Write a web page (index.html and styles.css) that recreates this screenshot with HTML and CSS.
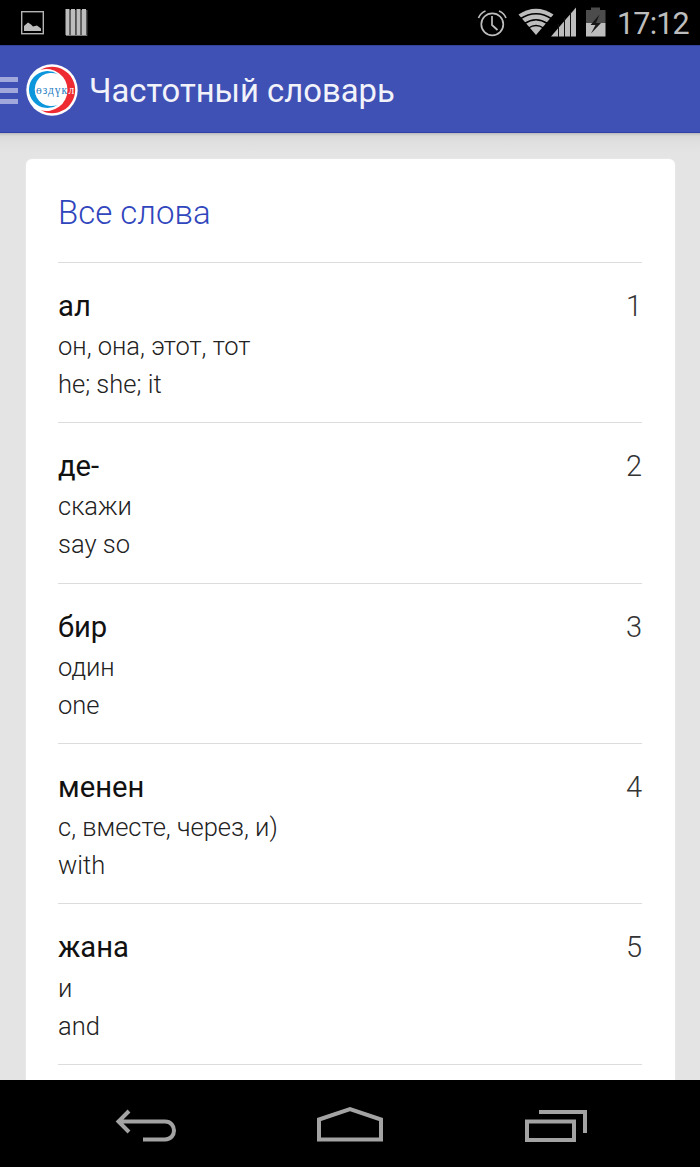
FILE: index.html
```html
<!DOCTYPE html>
<html lang="ru">
<head>
<meta charset="UTF-8">
<meta name="viewport" content="width=device-width, initial-scale=1.0">
<title>Частотный словарь</title>
<link rel="stylesheet" href="styles.css">
</head>
<body>
<div id="status-bar">
    <svg class="notifications" width="100" height="45" viewBox="0 0 100 45">
        <rect x="21.7" y="11.7" width="21.6" height="22" fill="none" stroke="#b4b4b4" stroke-width="1.4"/>
        <path d="M24 31v-5l4-3.500 3 2 2 2 4-1 4 3v2.500z" fill="#bdbdbd"/>
        <path d="M65.500 9h4v26h-4zM71 9h4v26h-4zM76.500 9h4v26h-4zM82 9h4v26h-4z" fill="#bdbdbd"/>
        <path d="M70.300 10v26M75.800 10v26M81.300 10v26M86.800 10v26M66 35.500h21" stroke="#777" fill="none"/>
    </svg>
    <svg class="system" width="140" height="45" viewBox="470 0 140 45">
        <!-- будильник -->
        <g fill="none" stroke="#bdbdbd" stroke-width="1.7">
            <circle cx="492.300" cy="24.300" r="11"/>
            <path d="M492 16v9l5.500 5M478.500 18q2-5 7-7M506 18q-2-5-7-7"/>
        </g>
        <!-- wi-fi -->
        <path d="M518.500 14.500Q536 3 553.500 14.500L536 35z" fill="#bdbdbd"/>
        <path d="M520 19q16-10.500 32 0M524.500 23.500q11.500-7.500 23 0M528.500 28q7.500-5 15 0" fill="none" stroke="#000" stroke-width="1.5"/>
        <!-- сеть -->
        <path d="M551 36.500L576 7.500v29z" fill="#bdbdbd"/>
        <path d="M558.500 24v13M564.500 18v19M570.500 12v25" stroke="#111" stroke-width="1"/>
        <!-- батарея -->
        <path d="M586 10h5V7.500h9V10h5.500v13H586z" fill="#4c4c4c"/>
        <path d="M586 23h19.500v13.500H586z" fill="#bdbdbd"/>
        <path d="M599.500 14.500L590.500 25h5l-4.500 8.500L601 23h-5z" fill="#161616"/>
    </svg>
    <span class="clock">17:12</span>
</div>

<div id="header">
    <div class="menu">
        <span></span>
        <span></span>
        <span></span>
    </div>
    <svg class="logo" width="52" height="52" viewBox="0 0 52 52">
        <circle cx="26" cy="26" r="25.700" fill="#fff"/>
        <path d="M14.400 5.900A23.200 23.200 0 1 1 14.400 46.100A21 21 0 1 0 14.400 5.900z" fill="#ee2b32"/>
        <path d="M32 10.300A18.500 18.500 0 1 0 32 40.700A16.600 16.600 0 1 1 32 10.300z" fill="#0c97dc"/>
        <text x="10" y="29.500" textLength="31" fill="#2a7fc4" class="logo-text">өздүк</text>
        <text x="42.500" y="29.500" fill="#fff" class="logo-text">л</text>
    </svg>
    <h1>Частотный словарь</h1>
</div>

<div id="content">
    <div id="card">
        <h2>Все слова</h2>
        <div class="word">
            <h3>ал</h3>
            <span class="number">1</span>
            <p>он, она, этот, тот</p>
            <p>he; she; it</p>
        </div>
        <div class="word">
            <h3>де-</h3>
            <span class="number">2</span>
            <p>скажи</p>
            <p>say so</p>
        </div>
        <div class="word">
            <h3>бир</h3>
            <span class="number">3</span>
            <p>один</p>
            <p>one</p>
        </div>
        <div class="word">
            <h3>менен</h3>
            <span class="number">4</span>
            <p>с, вместе, через, и)</p>
            <p>with</p>
        </div>
        <div class="word">
            <h3>жана</h3>
            <span class="number">5</span>
            <p>и</p>
            <p>and</p>
        </div>
        <div class="word"></div>
    </div>
</div>

<div id="nav-bar">
    <svg width="700" height="87" viewBox="0 1080 700 87" fill="none" stroke="#a3a3a3" stroke-width="4">
        <path d="M129 1111l-10.500 10.500L129 1132M120 1121.500h45c12 0 12 18 0 18h-22"/>
        <path d="M319 1139.500v-20l31-10.500 31 10.500v20z"/>
        <path d="M527 1121.500h47v18.500h-47zM539 1112h46v21"/>
    </svg>
</div>
</body>
</html>
```
FILE: styles.css
```css
* {
    box-sizing: border-box;
}

body {
    margin: 0;
    height: 1167px;
    display: flex;
    flex-direction: column;
    overflow: hidden;
    font-family: Roboto, sans-serif;
    background: #000;
}

#status-bar {
    height: 45px;
    flex: none;
    display: flex;
    background: #000;
}

.system {
    margin-left: 370px;
}

.clock {
    margin-left: 7px;
    font-size: 30.5px;
    letter-spacing: -0.8px;
    line-height: 47px;
    color: #bdbdbd;
}

#header {
    height: 88px;
    flex: none;
    display: flex;
    align-items: center;
    background: #3f51b5;
    border-top: 1px solid #35449b;
    border-bottom: 1px solid #3040a8;
}

.menu {
    width: 18px;
    display: flex;
    flex-direction: column;
    gap: 6px;
    margin-top: 3px;
}

.menu span {
    height: 5px;
    background: #a1a9dc;
}

.logo {
    margin-left: 8px;
    margin-top: 1px;
}

.logo-text {
    font-family: "Liberation Serif", serif;
    font-size: 11.5px;
}

h1 {
    margin: 3px 0 0 11px;
    font-size: 32.8px;
    font-weight: 400;
    color: #f2f3fa;
    white-space: nowrap;
}

#content {
    height: 946.5px;
    flex: none;
    padding: 25.5px 25.5px 0;
    overflow: hidden;
    background: linear-gradient(#bbb, #d9d9d9 3px, #dfdfdf 8px, #e4e4e4 20px);
}

#card {
    height: 1000px;
    padding: 0 32.5px;
    background: #fff;
    border-radius: 6px;
    box-shadow: 0 0 2px #eee;
}

h2 {
    margin: 0;
    height: 103.2px;
    font-size: 33px;
    font-weight: 300;
    line-height: 107px;
    color: #3046bd;
}

.word {
    height: 160.45px;
    padding-top: 23px;
    border-top: 1px solid #dcdcdc;
    display: grid;
    grid-template-columns: 1fr auto;
    grid-template-rows: 41.3px 38px 38px;
}

.word h3 {
    margin: 0;
    font-size: 29.2px;
    font-weight: 400;
    line-height: 41px;
    color: #111;
}

.number {
    font-size: 29px;
    font-weight: 300;
    line-height: 41px;
    color: #333;
}

.word p {
    grid-column: 1 / 3;
    margin: 0;
    font-size: 25.5px;
    font-weight: 300;
    line-height: 38px;
    color: #222;
}

#nav-bar {
    height: 87.5px;
    flex: none;
    background: #000;
}

#nav-bar svg {
    display: block;
}
```
